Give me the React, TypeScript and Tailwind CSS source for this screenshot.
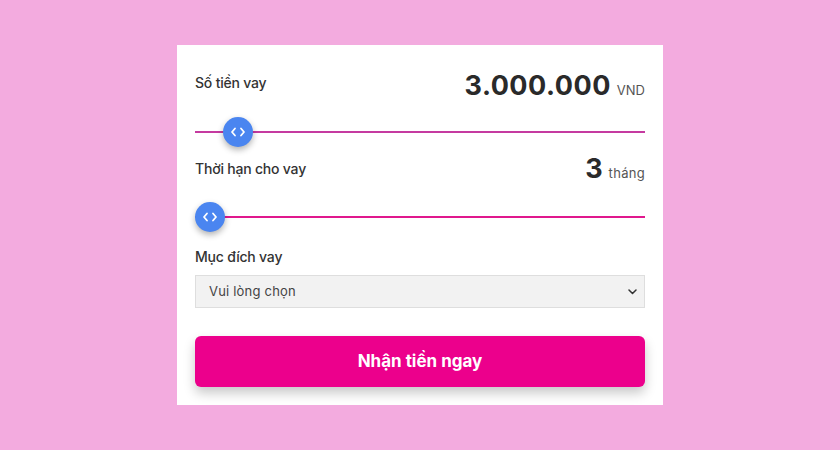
import React from "react";

function Thumb() {
  return (
    <div className="absolute top-1/2 -translate-y-1/2 w-[30px] h-[30px] rounded-full bg-[#4a85f0] shadow-[0_3px_6px_rgba(0,0,0,0.3)] flex items-center justify-center">
      <svg width="16" height="10" viewBox="0 0 16 10" fill="none" stroke="white" strokeWidth="1.8" strokeLinecap="round" strokeLinejoin="round">
        <path d="M5 1.5 L2 5 L5 8.5" />
        <path d="M11 1.5 L14 5 L11 8.5" />
      </svg>
    </div>
  );
}

export default function App() {
  const font = { fontFamily: "Inter, 'Noto Sans', sans-serif" };
  return (
    <div className="w-[840px] h-[450px] bg-[#f3abdf] flex justify-center" style={font}>
      <div className="mt-[45px] w-[486px] h-[360px] bg-white px-[18px] flex flex-col">
        <div className="mt-[25px] flex items-end justify-between">
          <span className="text-[14px] font-medium text-[#333] mb-[9px] tracking-[-0.2px]">Số tiền vay</span>
          <div className="flex items-baseline gap-[6px]">
            <span className="text-[27px] leading-[32px] font-bold text-[#2a2a2a] tracking-[0.5px]">3.000.000</span>
            <span className="text-[13px] text-[#555]">VND</span>
          </div>
        </div>
        <div className="relative mt-[15px] h-[30px]">
          <div className="absolute left-0 right-0 top-1/2 h-[2px] -translate-y-1/2 bg-[#c53aa0]"></div>
          <div className="absolute left-[28px] top-0 h-full w-[30px]"><Thumb /></div>
        </div>
        <div className="mt-[6px] flex items-end justify-between">
          <span className="text-[14px] font-medium text-[#333] mb-[6px] tracking-[-0.2px]">Thời hạn cho vay</span>
          <div className="flex items-baseline gap-[6px]">
            <span className="text-[27px] leading-[32px] font-bold text-[#2a2a2a]">3</span>
            <span className="text-[13px] text-[#555] tracking-[0.3px]">tháng</span>
          </div>
        </div>
        <div className="relative mt-[17px] h-[30px]">
          <div className="absolute left-0 right-0 top-1/2 h-[2px] -translate-y-1/2 bg-[#e0188d]"></div>
          <div className="absolute left-0 top-0 h-full w-[30px]"><Thumb /></div>
        </div>
        <div className="mt-[15px] text-[14px] leading-[20px] font-medium text-[#333] tracking-[-0.2px]">Mục đích vay</div>
        <div className="mt-[8px] h-[33px] bg-[#f2f2f2] border border-[#dedede] flex items-center justify-between pl-[13px] pr-[7px]">
          <span className="text-[13px] text-[#444] tracking-[0.2px]">Vui lòng chọn</span>
          <svg width="9" height="6" viewBox="0 0 9 6" fill="none" stroke="#333" strokeWidth="1.5" strokeLinecap="round" strokeLinejoin="round">
            <path d="M1 1 L4.5 4.5 L8 1" />
          </svg>
        </div>
        <button className="mt-[28px] h-[51px] w-full rounded-[6px] bg-[#ec008c] text-white text-[17px] font-bold shadow-[0_6px_12px_rgba(0,0,0,0.22)] flex items-center justify-center">
          Nhận tiền ngay
        </button>
      </div>
    </div>
  );
}
